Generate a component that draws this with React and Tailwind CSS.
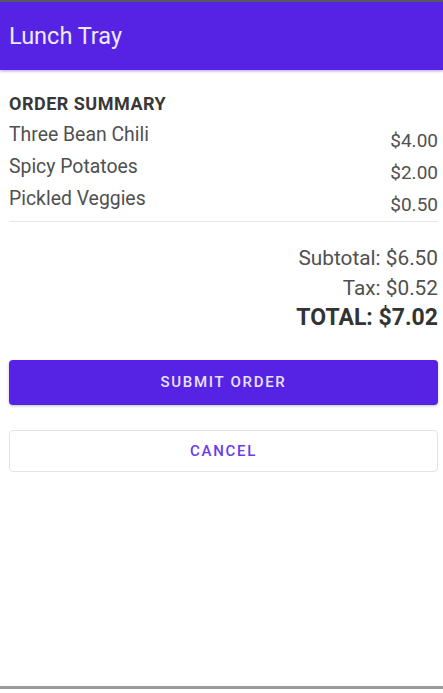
export default function App() {
  const items = [
    ["Three Bean Chili", "$4.00"],
    ["Spicy Potatoes", "$2.00"],
    ["Pickled Veggies", "$0.50"],
  ];
  return (
    <div
      className="w-[443px] h-[693px] flex flex-col bg-white overflow-hidden"
      style={{ fontFamily: "Roboto, 'Noto Sans', sans-serif" }}
    >
      <div className="h-[2px] bg-[#5a5a5a]" />
      <div className="h-[68px] bg-[#5623e5] flex items-center pl-[9px] pt-[2px] shadow-[0_1px_3px_rgba(86,35,229,0.45)] relative z-10">
        <span className="text-[23.5px] text-[#efeafd] leading-none">Lunch Tray</span>
      </div>
      <div className="flex-1 flex flex-col pl-[9px] pr-[5px]">
        <div className="mt-[22px] text-[18px] leading-[24px] font-bold text-[#383838] tracking-[0.5px]">
          ORDER SUMMARY
        </div>
        <div className="mt-[7px] flex flex-col">
          {items.map(([name, price]) => (
            <div key={name} className="h-[32px] flex justify-between text-[19.4px] leading-[24px] text-[#505050]">
              <span>{name}</span>
              <span className="mt-[6px] text-[19px]">{price}</span>
            </div>
          ))}
        </div>
        <div className="mt-[2px] h-px bg-[#e6e6e6]" />
        <div className="mt-[21px] flex flex-col items-end text-[#505050]">
          <div className="text-[20.8px] leading-[30px]">Subtotal: $6.50</div>
          <div className="text-[20.8px] leading-[30px]">Tax: $0.52</div>
          <div className="text-[23px] leading-[30px] font-bold text-[#333333]">TOTAL: $7.02</div>
        </div>
        <button className="mt-[27px] h-[45px] w-full rounded-[4px] bg-[#5623e5] text-[#e9e2fc] text-[15px] font-medium tracking-[1.7px] shadow-[0_1px_3px_rgba(0,0,0,0.25)]">
          SUBMIT ORDER
        </button>
        <button className="mt-[25px] h-[42px] w-full rounded-[4px] bg-white border border-[#e3e3e3] text-[#6a3ce8] text-[15px] font-medium tracking-[1.7px]">
          CANCEL
        </button>
        <div className="flex-1" />
      </div>
      <div className="h-[3px] bg-[#9a9a9a]" />
      <div className="h-[4px] bg-white" />
    </div>
  );
}
